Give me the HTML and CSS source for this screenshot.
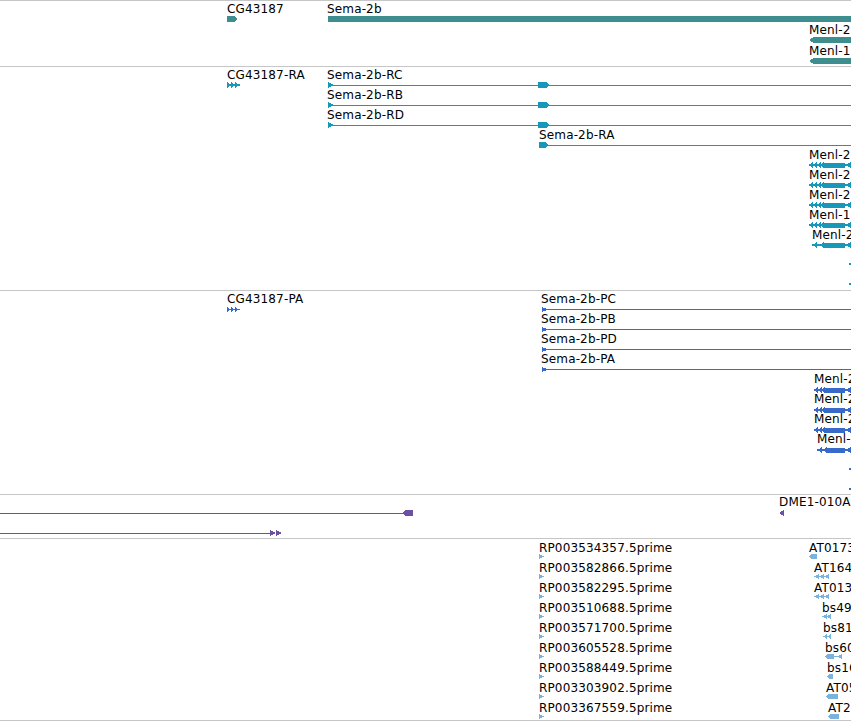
FILE: index.html
```html
<!DOCTYPE html>
<html>
  <head>
    <meta charset="UTF-8" />
    <title>Sema-2b region</title>
    <link rel="stylesheet" href="styles.css">
  </head>
  <body>
    <div class="browser">

      <!-- genes -->
      <div class="track t-gene">
        <div class="feat" style="left:227px;top:1px">
          <div class="lbl">CG43187</div>
          <svg class="gly" width="12" height="6"><polygon points="0,0 7,0 11,3 7,6 0,6"/></svg>
        </div>
        <div class="feat" style="left:327px;top:1px">
          <div class="lbl">Sema-2b</div>
          <svg class="gly" width="524" height="6"><rect x="1" y="0" width="523" height="6"/></svg>
        </div>
        <div class="feat" style="left:809px;top:22px">
          <div class="lbl">Menl-2</div>
          <svg class="gly" width="42" height="6"><polygon points="0,3 5,0 42,0 42,6 5,6"/></svg>
        </div>
        <div class="feat" style="left:809px;top:43px">
          <div class="lbl">Menl-1</div>
          <svg class="gly" width="42" height="6"><polygon points="0,3 5,0 42,0 42,6 5,6"/></svg>
        </div>
      </div>

      <!-- transcripts -->
      <div class="track t-mrna">
        <div class="feat" style="left:227px;top:1px">
          <div class="lbl">CG43187-RA</div>
          <svg class="gly" width="14" height="6"><polygon points="0,0 4,3 0,6"/><polygon points="4,0 8,3 4,6"/><polygon points="8,0 12,3 8,6"/><rect x="0" y="2" width="13" height="2"/></svg>
        </div>
        <div class="feat" style="left:327px;top:1px">
          <div class="lbl">Sema-2b-RC</div>
          <svg class="gly" width="524" height="6"><polygon points="1,0 7,3 1,6"/><rect x="1" y="3" width="523" height="1"/><polygon points="211,0 219,0 223,3 219,6 211,6"/></svg>
        </div>
        <div class="feat" style="left:327px;top:21px">
          <div class="lbl">Sema-2b-RB</div>
          <svg class="gly" width="524" height="6"><polygon points="1,0 7,3 1,6"/><rect x="1" y="3" width="523" height="1"/><polygon points="211,0 219,0 223,3 219,6 211,6"/></svg>
        </div>
        <div class="feat" style="left:327px;top:41px">
          <div class="lbl">Sema-2b-RD</div>
          <svg class="gly" width="524" height="6"><polygon points="1,0 7,3 1,6"/><rect x="1" y="3" width="523" height="1"/><polygon points="211,0 219,0 223,3 219,6 211,6"/></svg>
        </div>
        <div class="feat" style="left:539px;top:61px">
          <div class="lbl">Sema-2b-RA</div>
          <svg class="gly" width="312" height="6"><polygon points="0,0 6,0 9,3 6,6 0,6"/><rect x="0" y="3" width="312" height="1"/></svg>
        </div>
        <div class="feat" style="left:809px;top:81px">
          <div class="lbl">Menl-2</div>
          <svg class="gly menl" width="42" height="6"><rect x="0" y="2" width="42" height="2"/><polygon points="4,0 0,3 4,6"/><polygon points="8,0 4,3 8,6"/><polygon points="12,0 8,3 12,6"/><polygon points="15,0 11,3 15,6"/><rect x="14" y="0.5" width="22" height="5"/><polygon points="42,0 37,3 42,6"/></svg>
        </div>
        <div class="feat" style="left:809px;top:101px">
          <div class="lbl">Menl-2</div>
          <svg class="gly menl" width="42" height="6"><rect x="0" y="2" width="42" height="2"/><polygon points="4,0 0,3 4,6"/><polygon points="8,0 4,3 8,6"/><polygon points="12,0 8,3 12,6"/><polygon points="15,0 11,3 15,6"/><rect x="14" y="0.5" width="22" height="5"/><polygon points="42,0 37,3 42,6"/></svg>
        </div>
        <div class="feat" style="left:809px;top:121px">
          <div class="lbl">Menl-2</div>
          <svg class="gly menl" width="42" height="6"><rect x="0" y="2" width="42" height="2"/><polygon points="4,0 0,3 4,6"/><polygon points="8,0 4,3 8,6"/><polygon points="12,0 8,3 12,6"/><polygon points="15,0 11,3 15,6"/><rect x="14" y="0.5" width="22" height="5"/><polygon points="42,0 37,3 42,6"/></svg>
        </div>
        <div class="feat" style="left:809px;top:141px">
          <div class="lbl">Menl-1</div>
          <svg class="gly menl" width="42" height="6"><rect x="0" y="2" width="42" height="2"/><polygon points="4,0 0,3 4,6"/><polygon points="8,0 4,3 8,6"/><polygon points="12,0 8,3 12,6"/><polygon points="15,0 11,3 15,6"/><rect x="14" y="0.5" width="22" height="5"/><polygon points="42,0 37,3 42,6"/></svg>
        </div>
        <div class="feat" style="left:812px;top:161px">
          <div class="lbl">Menl-2</div>
          <svg class="gly menl" width="39" height="6"><rect x="0" y="2" width="39" height="2"/><polygon points="5,0 1,3 5,6"/><polygon points="12,0 8,3 12,6"/><rect x="11" y="0.5" width="22" height="5"/><polygon points="39,0 34,3 39,6"/></svg>
        </div>
        <svg class="dot" style="left:849px;top:196px" width="2" height="2"><rect width="2" height="2"/></svg>
        <svg class="dot" style="left:849px;top:216px" width="2" height="2"><rect width="2" height="2"/></svg>
      </div>

      <!-- proteins -->
      <div class="track t-prot">
        <div class="feat" style="left:227px;top:1px">
          <div class="lbl">CG43187-PA</div>
          <svg class="gly" width="14" height="5"><polygon points="0,0 4,2.5 0,5"/><polygon points="4,0 8,2.5 4,5"/><polygon points="8,0 12,2.5 8,5"/><rect x="0" y="2" width="13" height="1"/></svg>
        </div>
        <div class="feat" style="left:541px;top:1px">
          <div class="lbl">Sema-2b-PC</div>
          <svg class="gly" width="310" height="5"><polygon points="1,0 8,2.5 1,5"/><rect x="1" y="2" width="309" height="1"/></svg>
        </div>
        <div class="feat" style="left:541px;top:21px">
          <div class="lbl">Sema-2b-PB</div>
          <svg class="gly" width="310" height="5"><polygon points="1,0 8,2.5 1,5"/><rect x="1" y="2" width="309" height="1"/></svg>
        </div>
        <div class="feat" style="left:541px;top:41px">
          <div class="lbl">Sema-2b-PD</div>
          <svg class="gly" width="310" height="5"><polygon points="1,0 8,2.5 1,5"/><rect x="1" y="2" width="309" height="1"/></svg>
        </div>
        <div class="feat" style="left:541px;top:61px">
          <div class="lbl">Sema-2b-PA</div>
          <svg class="gly" width="310" height="5"><polygon points="1,0 8,2.5 1,5"/><rect x="1" y="2" width="309" height="1"/></svg>
        </div>
        <div class="feat" style="left:814px;top:81px">
          <div class="lbl">Menl-2</div>
          <svg class="gly" width="37" height="6"><rect x="0" y="2" width="37" height="2"/><polygon points="4,0 0,3 4,6"/><polygon points="8,0 4,3 8,6"/><polygon points="11,0 7,3 11,6"/><rect x="10" y="0.5" width="21" height="5"/><polygon points="37,0 32,3 37,6"/></svg>
        </div>
        <div class="feat" style="left:814px;top:101px">
          <div class="lbl">Menl-2</div>
          <svg class="gly" width="37" height="6"><rect x="0" y="2" width="37" height="2"/><polygon points="4,0 0,3 4,6"/><polygon points="8,0 4,3 8,6"/><polygon points="11,0 7,3 11,6"/><rect x="10" y="0.5" width="21" height="5"/><polygon points="37,0 32,3 37,6"/></svg>
        </div>
        <div class="feat" style="left:814px;top:121px">
          <div class="lbl">Menl-2</div>
          <svg class="gly" width="37" height="6"><rect x="0" y="2" width="37" height="2"/><polygon points="4,0 0,3 4,6"/><polygon points="8,0 4,3 8,6"/><polygon points="11,0 7,3 11,6"/><rect x="10" y="0.5" width="21" height="5"/><polygon points="37,0 32,3 37,6"/></svg>
        </div>
        <div class="feat" style="left:817px;top:141px">
          <div class="lbl">Menl-1</div>
          <svg class="gly" width="34" height="6"><rect x="0" y="2" width="34" height="2"/><polygon points="5,0 1,3 5,6"/><polygon points="10,0 6,3 10,6"/><rect x="9" y="0.5" width="19" height="5"/><polygon points="34,0 29,3 34,6"/></svg>
        </div>
        <svg class="dot" style="left:849px;top:177px" width="2" height="2"><rect width="2" height="2"/></svg>
        <svg class="dot" style="left:849px;top:197px" width="2" height="2"><rect width="2" height="2"/></svg>
      </div>

      <!-- repeats -->
      <div class="track t-rep">
        <svg class="gly line" style="left:0;top:15px" width="414" height="6"><rect x="0" y="3" width="404" height="1"/><polygon points="402,3 406,0 413,0 413,6 406,6"/></svg>
        <svg class="gly line" style="left:0;top:35px" width="284" height="6"><rect x="0" y="3" width="272" height="1"/><polygon points="270,0 276,3 270,6"/><polygon points="276,0 282,3 276,6"/></svg>
        <div class="feat" style="left:779px;top:0">
          <div class="lbl">DME1-010A</div>
          <svg class="gly" width="6" height="6"><polygon points="5,0 0,3 5,6"/></svg>
        </div>
      </div>

      <!-- 5' ends -->
      <div class="track t-est">
        <div class="feat" style="left:539px;top:2px"><div class="lbl">RP003534357.5prime</div><svg class="gly" width="6" height="5"><polygon points="0,0 5,2.5 0,5"/></svg></div>
        <div class="feat" style="left:539px;top:22px"><div class="lbl">RP003582866.5prime</div><svg class="gly" width="6" height="5"><polygon points="0,0 5,2.5 0,5"/></svg></div>
        <div class="feat" style="left:539px;top:42px"><div class="lbl">RP003582295.5prime</div><svg class="gly" width="6" height="5"><polygon points="0,0 5,2.5 0,5"/></svg></div>
        <div class="feat" style="left:539px;top:62px"><div class="lbl">RP003510688.5prime</div><svg class="gly" width="6" height="5"><polygon points="0,0 5,2.5 0,5"/></svg></div>
        <div class="feat" style="left:539px;top:82px"><div class="lbl">RP003571700.5prime</div><svg class="gly" width="6" height="5"><polygon points="0,0 5,2.5 0,5"/></svg></div>
        <div class="feat" style="left:539px;top:102px"><div class="lbl">RP003605528.5prime</div><svg class="gly" width="6" height="5"><polygon points="0,0 5,2.5 0,5"/></svg></div>
        <div class="feat" style="left:539px;top:122px"><div class="lbl">RP003588449.5prime</div><svg class="gly" width="6" height="5"><polygon points="0,0 5,2.5 0,5"/></svg></div>
        <div class="feat" style="left:539px;top:142px"><div class="lbl">RP003303902.5prime</div><svg class="gly" width="6" height="5"><polygon points="0,0 5,2.5 0,5"/></svg></div>
        <div class="feat" style="left:539px;top:162px"><div class="lbl">RP003367559.5prime</div><svg class="gly" width="6" height="5"><polygon points="0,0 5,2.5 0,5"/></svg></div>

        <div class="feat" style="left:809px;top:2px"><div class="lbl">AT01737.5prime</div><svg class="gly" width="9" height="5"><polygon points="0,2.5 3,0 8,0 8,5 3,5"/></svg></div>
        <div class="feat" style="left:814px;top:22px"><div class="lbl">AT16402.5prime</div><svg class="gly" width="16" height="5"><polygon points="5,0 0,2.5 5,5"/><polygon points="10,0 5,2.5 10,5"/><polygon points="15,0 10,2.5 15,5"/></svg></div>
        <div class="feat" style="left:814px;top:42px"><div class="lbl">AT01338.5prime</div><svg class="gly" width="16" height="5"><polygon points="5,0 0,2.5 5,5"/><polygon points="10,0 5,2.5 10,5"/><polygon points="15,0 10,2.5 15,5"/></svg></div>
        <div class="feat" style="left:822px;top:62px"><div class="lbl">bs4912.5prime</div><svg class="gly" width="10" height="5"><polygon points="5,0 0,2.5 5,5"/><polygon points="9,0 4,2.5 9,5"/></svg></div>
        <div class="feat" style="left:823px;top:82px"><div class="lbl">bs8138.5prime</div><svg class="gly" width="9" height="5"><polygon points="4,0 0,2.5 4,5"/><polygon points="8,0 4,2.5 8,5"/></svg></div>
        <div class="feat" style="left:825px;top:102px"><div class="lbl">bs6077.5prime</div><svg class="gly" width="18" height="5"><polygon points="0,2.5 3,0 9,0 9,5 3,5"/><rect x="8" y="2" width="5" height="1"/><polygon points="17,0 12,2.5 17,5"/></svg></div>
        <div class="feat" style="left:827px;top:122px"><div class="lbl">bs1609.5prime</div><svg class="gly" width="7" height="5"><polygon points="0,2.5 3,0 6,0 6,5 3,5"/></svg></div>
        <div class="feat" style="left:826px;top:142px"><div class="lbl">AT05521.5prime</div><svg class="gly" width="13" height="5"><polygon points="0,2.5 3,0 12,0 12,5 3,5"/></svg></div>
        <div class="feat" style="left:828px;top:162px"><div class="lbl">AT20981.5prime</div><svg class="gly" width="12" height="5"><polygon points="0,2.5 3,0 11,0 11,5 3,5"/></svg></div>
      </div>

    </div>
  </body>
</html>
```

FILE: styles.css
```css
/* general */
* {
  box-sizing: border-box;
}

body {
  margin: 0;
  padding: 0;
  width: 851px;
  height: 722px;
  overflow: hidden;
  background-color: #fff;
  color: #000;
  font-family: "DejaVu Sans", "Liberation Sans", sans-serif;
  font-size: 12px;
}

.browser {
  width: 851px;
}

/* tracks */
.track {
  position: relative;
  overflow: hidden;
  border-top: 1px solid #c6c6c6;
}

.t-gene { height: 66px; color: #3e8e90; }
.t-mrna { height: 224px; color: #1897b8; }
.t-prot { height: 204px; color: #386bc9; }
.t-rep  { height: 44px;  color: #6b51a3; }
.t-est  { height: 183px; color: #7cb3dc; border-bottom: 1px solid #c6c6c6; }

.feat {
  position: absolute;
  white-space: nowrap;
}

.feat .lbl {
  height: 14px;
  line-height: 14px;
  letter-spacing: 0.15px;
  color: #000;
}

.gly {
  display: block;
  fill: currentColor;
  shape-rendering: crispEdges;
}

.t-prot .gly,
.t-rep .gly {
  margin-top: 1px;
}

.t-est .gly {
  margin-top: -1px;
}

.gly.line,
.dot {
  position: absolute;
  margin-top: 0;
}

.dot {
  fill: currentColor;
}
```
